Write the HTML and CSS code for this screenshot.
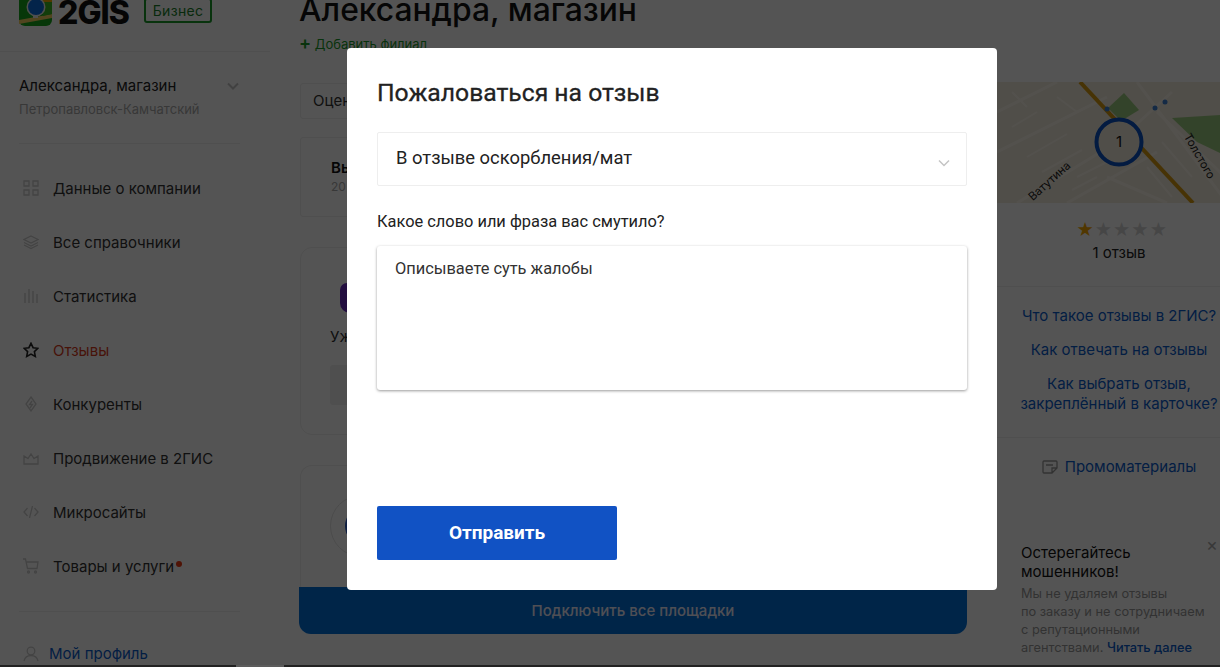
FILE: index.html
```html
<!DOCTYPE html>
<html lang="ru">
<head>
    <meta charset="UTF-8">
    <title>Пожаловаться на отзыв</title>
    <link rel="stylesheet" href="styles.css">
</head>
<body>
    <div class="page">
        <aside class="sidebar">
            <div class="brand">
                <svg class="brand-logo" width="33" height="34" viewBox="0 0 33 34">
                    <rect width="33" height="34" rx="6" fill="#17a81c"/>
                    <path d="M20 0H33V14H20Z" fill="#f5a900"/>
                    <path d="M0 28L33 22V26L0 32Z" fill="#f4d060"/>
                    <path d="M24 10H33V22L24 24Z" fill="#3cba22"/>
                    <path d="M14 20h5v6h-5z" fill="#f0f0f0"/>
                    <circle cx="17" cy="15" r="9.500" fill="#f0f0f0"/>
                    <circle cx="17" cy="15" r="8" fill="#0a6fe0"/>
                </svg>
                <span class="brand-name">2GIS</span>
                <span class="brand-tag">Бизнес</span>
            </div>

            <div class="company">
                <div class="company-name">Александра, магазин
                    <svg class="company-arrow" width="12" height="8" viewBox="0 0 12 8"><path d="M1 1.500l5 5 5-5" fill="none" stroke="#c4c4c4" stroke-width="2"/></svg>
                </div>
                <div class="company-city">Петропавловск-Камчатский</div>
            </div>

            <nav class="nav">
                <a class="nav-item">
                    <svg class="nav-icon" viewBox="0 0 16 16"><path d="M1 1h5v5H1zM10 1h5v5h-5zM1 10h5v5H1zM10 10h5v5h-5z"/></svg>
                    Данные о компании
                </a>
                <a class="nav-item">
                    <svg class="nav-icon" viewBox="0 0 16 16"><path d="M8 2l7 3.500L8 9 1 5.500zM1 8.500L8 12l7-3.500M1 11L8 14.500 15 11"/></svg>
                    Все справочники
                </a>
                <a class="nav-item">
                    <svg class="nav-icon" viewBox="0 0 16 16"><path d="M2 5v10M6 1v14M10 3v12M14 6v9"/></svg>
                    Статистика
                </a>
                <a class="nav-item nav-item-active">
                    <svg class="nav-icon nav-icon-dark" viewBox="0 0 16 16"><path d="M8 1.300l2.100 4.400 4.800.6-3.500 3.300.9 4.800L8 12.100l-4.300 2.300.9-4.800L1.100 6.300l4.800-.6z"/></svg>
                    Отзывы
                </a>
                <a class="nav-item">
                    <svg class="nav-icon" viewBox="0 0 16 16"><path d="M8 1l5 7-5 7-5-7zM9 5L6.500 8.500H9.500L7 12"/></svg>
                    Конкуренты
                </a>
                <a class="nav-item">
                    <svg class="nav-icon" viewBox="0 0 16 16"><path d="M1 14V6l4 2.500L8 4l3 4.500L15 6v8z"/></svg>
                    Продвижение в 2ГИС
                </a>
                <a class="nav-item">
                    <svg class="nav-icon" viewBox="0 0 16 16"><path d="M4.500 4L1 8l3.500 4M11.500 4L15 8l-3.500 4M9.500 2l-3 12"/></svg>
                    Микросайты
                </a>
                <a class="nav-item">
                    <svg class="nav-icon" viewBox="0 0 16 16"><path d="M0 1h2.500l2 9.500H14l1-6.500H3.500"/><circle cx="5.500" cy="14" r="1"/><circle cx="12.500" cy="14" r="1"/></svg>
                    Товары и услуги<span class="nav-dot"></span>
                </a>
            </nav>

            <a class="profile">
                <svg class="nav-icon" viewBox="0 0 16 16"><circle cx="8" cy="5" r="3.800"/><path d="M1 15c.8-3.500 3.500-5.500 7-5.500s6.200 2 7 5.500"/></svg>
                Мой профиль
            </a>
        </aside>

        <main class="main">
            <h1 class="main-title">Александра, магазин</h1>
            <a class="add-branch"><span class="add-plus">+</span> Добавить филиал</a>

            <div class="filter">Оцен</div>

            <div class="card-small">
                <div class="card-small-title">Вы</div>
                <div class="card-small-sub">20</div>
            </div>

            <div class="card">
                <div class="card-icon"></div>
                <div class="card-text">Уж</div>
                <div class="card-button"></div>
            </div>

            <div class="card card-connect">
                <div class="card-circle"><div class="card-circle-inner"></div></div>
            </div>

            <div class="connect-button">Подключить все площадки</div>
        </main>

        <aside class="aside">
            <svg class="map" width="244" height="121" viewBox="0 0 244 121">
                <rect width="244" height="121" fill="#f2ebdc"/>
                <path d="M0 30L60 0M0 70L110 15M20 121L120 60M70 121L160 70M140 0L230 121M160 30L244 110M120 60L175 10M110 95L170 121" stroke="#fbf6ea" stroke-width="3" fill="none"/>
                <path d="M15 45L40 30M30 75L70 52M45 90L85 68M80 95L110 80M75 108L100 95M15 10L30 25M60 15L80 30M165 60L195 95M150 85L175 115" stroke="#fbf6ea" stroke-width="2" fill="none"/>
                <path d="M111 26L127 11L142 28L124 39Z" fill="#9ccc80"/>
                <path d="M175 36L223 33V71L200 60Z" fill="#9ccc80"/>
                <path d="M83 0L196 121" stroke="#d89a10" stroke-width="4" fill="none"/>
                <circle cx="122" cy="60" r="22.500" fill="#f2ebdc" stroke="#0a52c4" stroke-width="4"/>
                <circle cx="110" cy="27" r="2.500" fill="#3d7fd0"/>
                <circle cx="158" cy="26" r="2.500" fill="#3d7fd0"/>
                <circle cx="168" cy="20" r="2.500" fill="#3d7fd0"/>
                <text class="map-pin" x="122" y="65" text-anchor="middle">1</text>
                <text class="map-label" x="55" y="102" text-anchor="middle" transform="rotate(-42 55 102)">Ватутина</text>
                <text class="map-label" x="199" y="76" text-anchor="middle" transform="rotate(60 199 76)">Толстого</text>
            </svg>

            <div class="rating">
                <div class="stars"><span class="star-on">★</span>★★★★</div>
                <div class="rating-count">1 отзыв</div>
            </div>

            <div class="help-links">
                <a class="help-link">Что такое отзывы в 2ГИС?</a>
                <a class="help-link">Как отвечать на отзывы</a>
                <a class="help-link">Как выбрать отзыв,<br>закреплённый в карточке?</a>
            </div>

            <div class="promo">
                <svg class="promo-icon" width="16" height="14" viewBox="0 0 16 14"><path d="M2 1h12a1 1 0 0 1 1 1v6l-5 5H2a1 1 0 0 1-1-1V2a1 1 0 0 1 1-1zM10 13V8h5M4 5h7"/></svg>
                <a class="help-link">Промоматериалы</a>
            </div>

            <div class="warning">
                <span class="warning-close">×</span>
                <div class="warning-title">Остерегайтесь<br>мошенников!</div>
                <p class="warning-text">Мы не удаляем отзывы<br>по заказу и не сотрудничаем<br>с репутационными<br>агентствами. <a class="warning-link">Читать далее</a></p>
            </div>
        </aside>
    </div>

    <div class="overlay">
        <div class="modal">
            <h2 class="modal-title">Пожаловаться на отзыв</h2>
            <div class="select">
                <span class="select-value">В отзыве оскорбления/мат</span>
                <svg class="select-arrow" width="12" height="8" viewBox="0 0 12 8"><path d="M1 1.500l5 5 5-5" fill="none" stroke="#c4c4c4" stroke-width="1.500"/></svg>
            </div>
            <div class="field-label">Какое слово или фраза вас смутило?</div>
            <div class="textarea">Описываете суть жалобы</div>
            <button class="send-button">Отправить</button>
        </div>
    </div>

    <div class="bottom-edge"><span class="bottom-edge-left"></span><span class="bottom-edge-gap"></span><span class="bottom-edge-right"></span></div>
</body>
</html>
```

FILE: styles.css
```css
* {
    box-sizing: border-box;
}
html, body {
    margin: 0;
    padding: 0;
    height: 667px;
    overflow: hidden;
}
body {
    position: relative;
    font-family: Inter, "Liberation Sans", sans-serif;
    color: #222;
    background-color: #fff;
}
.page {
    display: flex;
    width: 1220px;
    height: 667px;
    overflow: hidden;
}

/* sidebar */
.sidebar {
    flex: 0 0 270px;
    height: 667px;
}
.brand {
    display: flex;
    align-items: flex-end;
    height: 52px;
    padding: 0 0 25px 19px;
    border-bottom: 1px solid #eee;
    overflow: hidden;
}
.brand-logo {
    flex: none;
}
.brand-name {
    margin-left: 6px;
    margin-bottom: 1px;
    font-size: 32px;
    font-weight: 800;
    line-height: 24px;
    letter-spacing: -1px;
    color: #111;
}
.brand-tag {
    flex: none;
    margin-left: 15px;
    margin-bottom: 3px;
    padding: 0 7px;
    height: 25px;
    line-height: 22px;
    font-size: 14px;
    letter-spacing: .3px;
    color: #1a7f2a;
    border: 2px solid #1a9a2a;
    border-radius: 3px;
}
.company {
    margin: 0 30px 0 19px;
    padding: 25px 0 26px;
    border-bottom: 1px solid #eee;
}
.company-name {
    display: flex;
    justify-content: space-between;
    align-items: center;
    font-size: 15px;
    line-height: 18px;
    padding-right: 1px;
}
.company-city {
    margin-top: 6px;
    font-size: 13px;
    line-height: 16px;
    color: #aaa;
}
.nav {
    margin: 17px 30px 0 19px;
    padding-bottom: 18px;
    border-bottom: 1px solid #eee;
}
.nav-item {
    display: flex;
    align-items: center;
    height: 54px;
    padding-left: 4px;
    font-size: 15px;
    color: #333;
}
.nav-item-active {
    color: #d83a1c;
}
.nav-icon {
    flex: none;
    width: 16px;
    height: 16px;
    margin-right: 14px;
    fill: none;
    stroke: #ccc;
    stroke-width: 1.300;
}
.nav-icon-dark {
    stroke: #222;
    stroke-width: 1.600;
}
.nav-dot {
    width: 6px;
    height: 6px;
    margin: 0 0 4px 2px;
    border-radius: 50%;
    background-color: #ef3a12;
}
.profile {
    display: flex;
    align-items: center;
    margin: 32px 0 0 23px;
    font-size: 15px;
    color: #0a5ccc;
}
.profile .nav-icon {
    margin-right: 10px;
}

/* middle column */
.main {
    flex: 0 0 668px;
    margin-left: 29px;
}
.main-title {
    margin: -8px 0 0;
    font-size: 31.800px;
    font-weight: 500;
    line-height: 36px;
    color: #141414;
}
.add-branch {
    display: block;
    margin-top: 7px;
    font-size: 13px;
    line-height: 16px;
    color: #1a9a2a;
}
.add-plus {
    font-size: 18px;
    font-weight: 600;
}
.filter {
    margin: 31px 0 0 1px;
    height: 36px;
    padding: 0 12px;
    line-height: 34px;
    font-size: 15px;
    color: #333;
    border: 1px solid #eee;
    border-radius: 3px;
}
.card-small {
    margin: 18px 0 0 1px;
    height: 80px;
    padding: 21px 30px 0;
    border: 1px solid #eee;
    border-radius: 3px;
}
.card-small-title {
    font-size: 15px;
    font-weight: 600;
    line-height: 18px;
    color: #111;
}
.card-small-sub {
    margin-top: 2px;
    font-size: 12px;
    line-height: 16px;
    color: #aaa;
}
.card {
    margin: 30px 0 0 1px;
    height: 188px;
    padding: 35px 29px 0;
    border: 1px solid #eee;
    border-radius: 12px;
}
.card-icon {
    width: 14px;
    height: 30px;
    margin-left: 10px;
    border-radius: 7px 0 0 10px;
    background-color: #6a2cc0;
}
.card-text {
    margin-top: 15px;
    font-size: 15px;
    line-height: 18px;
    color: #333;
}
.card-button {
    width: 60px;
    height: 40px;
    margin-top: 19px;
    background-color: #eee;
    border-radius: 3px;
}
.card-connect {
    height: 122px;
    padding: 29px 29px 0;
    border-bottom: 0;
    border-radius: 12px 12px 0 0;
}
.card-circle {
    display: flex;
    align-items: center;
    padding-left: 14px;
    width: 62px;
    height: 62px;
    border: 1px solid #e4e4e4;
    border-radius: 50%;
}
.card-circle-inner {
    width: 30px;
    height: 34px;
    border-radius: 50%;
    background-color: #2c5cc4;
}
.connect-button {
    height: 47px;
    line-height: 47px;
    text-align: center;
    font-size: 15px;
    font-weight: 500;
    color: #eef;
    background-color: #0070da;
    border-radius: 0 0 12px 12px;
}

/* right column */
.aside {
    flex: 0 0 244px;
    margin-left: 30px;
    padding-top: 82px;
    text-align: center;
}
.map {
    display: block;
}
.map-pin {
    font-family: Inter, "Liberation Sans", sans-serif;
    font-size: 15px;
    fill: #111;
}
.map-label {
    font-family: Inter, "Liberation Sans", sans-serif;
    font-size: 11.500px;
    fill: #222;
}
.rating {
    height: 83px;
    padding-top: 16px;
}
.stars {
    padding-left: 6px;
    font-size: 17px;
    line-height: 22px;
    letter-spacing: .5px;
    color: #d4d4d4;
}
.star-on {
    color: #f5a800;
}
.rating-count {
    margin-top: 3px;
    font-size: 15px;
    line-height: 18px;
    color: #222;
}
.help-links {
    display: flex;
    flex-direction: column;
    gap: 14px;
    height: 152px;
    padding-top: 19px;
    border-top: 1px solid #eee;
    border-bottom: 1px solid #eee;
}
.help-link {
    font-size: 15px;
    line-height: 20px;
    color: #0a5ccc;
}
.promo {
    display: flex;
    justify-content: center;
    align-items: center;
    gap: 7px;
    margin-top: 19px;
    height: 20px;
}
.promo-icon {
    fill: none;
    stroke: #999;
    stroke-width: 1.300;
}
.warning {
    position: relative;
    margin-top: 66px;
    padding-left: 24px;
    text-align: left;
}
.warning-close {
    position: absolute;
    left: 209px;
    top: -7px;
    font-size: 18px;
    line-height: 18px;
    color: #aaa;
}
.warning-title {
    font-size: 15px;
    line-height: 19px;
    color: #111;
}
.warning-text {
    margin: 4px 0 0;
    font-size: 12.800px;
    line-height: 18px;
    color: #999;
}
.warning-link {
    color: #0a5ccc;
    font-weight: 500;
}

/* modal */
.overlay {
    position: absolute;
    top: 0;
    left: 0;
    width: 1220px;
    height: 667px;
    padding-top: 48px;
    background-color: rgba(0, 0, 0, .67);
}
.modal {
    display: flex;
    flex-direction: column;
    align-items: flex-start;
    width: 650px;
    height: 542px;
    margin-left: 347px;
    padding: 30px;
    font-family: Roboto, "Liberation Sans", sans-serif;
    background-color: #fff;
    border-radius: 4px;
}
.modal-title {
    margin: 0;
    font-size: 24.700px;
    font-weight: 400;
    line-height: 30px;
    -webkit-text-stroke: .3px #222;
    color: #222;
}
.select {
    display: flex;
    justify-content: space-between;
    align-items: center;
    width: 590px;
    height: 54px;
    margin-top: 24px;
    padding: 0 16px 0 18px;
    font-size: 18.400px;
    color: #222;
    border: 1px solid #eee;
    border-radius: 2px;
}
.select-value {
    margin-bottom: 3px;
}
.select-arrow {
    margin-top: 8px;
}
.field-label {
    margin-top: 26px;
    font-size: 16.400px;
    line-height: 20px;
    color: #222;
}
.textarea {
    width: 590px;
    height: 144px;
    margin-top: 14px;
    padding: 13px 18px;
    font-size: 16.400px;
    line-height: 20px;
    color: #333;
    border-radius: 3px;
    box-shadow: 0 1px 3px rgba(0, 0, 0, .4);
}
.send-button {
    width: 240px;
    height: 54px;
    margin-top: auto;
    padding: 0 0 2px;
    font-family: Roboto, "Liberation Sans", sans-serif;
    font-size: 19px;
    font-weight: 700;
    color: #fff;
    background-color: #1152c4;
    border: none;
    border-radius: 2px;
    cursor: pointer;
}
.bottom-edge {
    position: absolute;
    left: 0;
    top: 665px;
    display: flex;
    width: 1220px;
    height: 2px;
}
.bottom-edge-left {
    flex: 0 0 236px;
    background-color: #222;
}
.bottom-edge-gap {
    flex: 0 0 48px;
    background-color: #5c5c5c;
}
.bottom-edge-right {
    flex: 1;
    background-color: #222;
}
```
